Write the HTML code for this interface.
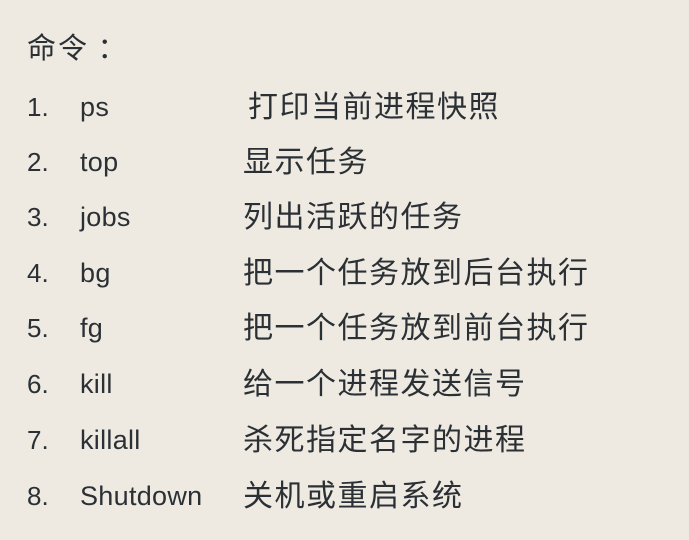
<!DOCTYPE html>
<html><head><meta charset="utf-8"><style>
html,body{margin:0;padding:0;}
body{width:689px;height:540px;background:#eeeae2;position:relative;overflow:hidden;color:#2b3035;font-family:"Liberation Sans","Noto Sans CJK SC",sans-serif;}
.r{position:absolute;left:0;height:40px;line-height:40px;white-space:nowrap;}
.n{position:absolute;left:27px;font-size:26px;top:2px;}
.c{position:absolute;left:80px;font-size:27px;letter-spacing:0.3px;top:2px;}
.d{position:absolute;left:243px;font-size:30px;font-family:"Noto Sans CJK SC",sans-serif;letter-spacing:1.5px;top:-1px;}
.h{position:absolute;left:27px;top:26px;font-size:29px;font-family:"Noto Sans CJK SC",sans-serif;line-height:40px;letter-spacing:2px;}
</style></head><body>
<div class="h">命令 ：</div>
<div class="r" style="top:85px"><span class="n">1.</span><span class="c">ps</span><span class="d" style="left:248px">打印当前进程快照</span></div>
<div class="r" style="top:140px"><span class="n">2.</span><span class="c">top</span><span class="d">显示任务</span></div>
<div class="r" style="top:195px"><span class="n">3.</span><span class="c">jobs</span><span class="d">列出活跃的任务</span></div>
<div class="r" style="top:251px"><span class="n">4.</span><span class="c">bg</span><span class="d">把一个任务放到后台执行</span></div>
<div class="r" style="top:306px"><span class="n">5.</span><span class="c">fg</span><span class="d">把一个任务放到前台执行</span></div>
<div class="r" style="top:362px"><span class="n">6.</span><span class="c">kill</span><span class="d">给一个进程发送信号</span></div>
<div class="r" style="top:418px"><span class="n">7.</span><span class="c">killall</span><span class="d">杀死指定名字的进程</span></div>
<div class="r" style="top:474px"><span class="n">8.</span><span class="c">Shutdown</span><span class="d">关机或重启系统</span></div>
</body></html>
